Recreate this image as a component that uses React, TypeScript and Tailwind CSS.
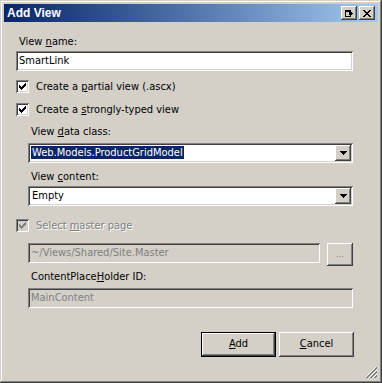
import React from "react";

const font = { fontFamily: '"DejaVu Sans Condensed", "DejaVu Sans", "Liberation Sans", sans-serif' };

const sunken =
  "shadow-[inset_1px_1px_#808080,inset_-1px_-1px_#ffffff,inset_2px_2px_#404040,inset_-2px_-2px_#d4d0c8]";
const raised =
  "shadow-[inset_-1px_-1px_#404040,inset_1px_1px_#ffffff,inset_-2px_-2px_#808080,inset_2px_2px_#d4d0c8]";

const CheckMark: React.FC<{ color: string }> = ({ color }) => (
  <svg width="7" height="7" viewBox="0 0 7 7" shapeRendering="crispEdges">
    <rect x="0" y="2" width="1" height="3" fill={color} />
    <rect x="1" y="3" width="1" height="3" fill={color} />
    <rect x="2" y="4" width="1" height="3" fill={color} />
    <rect x="3" y="3" width="1" height="3" fill={color} />
    <rect x="4" y="2" width="1" height="3" fill={color} />
    <rect x="5" y="1" width="1" height="3" fill={color} />
    <rect x="6" y="0" width="1" height="3" fill={color} />
  </svg>
);

const CheckBox: React.FC<{ disabled?: boolean }> = ({ disabled }) => (
  <div
    className={`w-[13px] h-[13px] shrink-0 flex items-center justify-center ${sunken} ${
      disabled ? "bg-[#d4d0c8]" : "bg-white"
    }`}
  >
    <CheckMark color={disabled ? "#808080" : "#000000"} />
  </div>
);

const Arrow = () => (
  <div className={`w-[16px] h-[16px] shrink-0 bg-[#d4d0c8] flex items-center justify-center ${raised}`}>
    <svg width="7" height="4" viewBox="0 0 7 4" shapeRendering="crispEdges">
      <path d="M0 0h7v1H0zM1 1h5v1H1zM2 2h3v1H2zM3 3h1v1H3z" fill="#000" />
    </svg>
  </div>
);

const Label: React.FC<{ children: React.ReactNode; className?: string }> = ({ children, className }) => (
  <div className={`h-[13px] leading-[13px] pl-[3px] text-black ${className ?? ""}`}>{children}</div>
);

const App: React.FC = () => {
  return (
    <div
      style={font}
      className="w-[382px] h-[383px] bg-[#d4d0c8] relative p-[4px] text-[11px] shadow-[inset_-1px_-1px_#404040,inset_1px_1px_#d4d0c8,inset_-2px_-2px_#808080,inset_2px_2px_#ffffff]"
    >
      {/* title bar */}
      <div className="h-[18px] flex items-center justify-between bg-gradient-to-r from-[#0a246a] to-[#a6caf0] pl-[3px] pr-[3px]">
        <span className="text-white font-bold text-[12px] leading-[13px] font-['Liberation_Sans',sans-serif]">
          Add View
        </span>
        <div className="flex gap-[2px]">
          <div className={`w-[16px] h-[14px] bg-[#d4d0c8] flex items-center justify-center ${raised}`}>
            <svg width="9" height="7" viewBox="0 0 9 7" shapeRendering="crispEdges">
              <path d="M0 0h6v2H0zM0 2h1v5H0zM0 6h6v1H0zM5 5h1v1H5z" fill="#000" />
              <path d="M4 2h1v3H4zM5 1h1v5H5zM6 2h1v3H6zM7 3h1v1H7z" fill="#000" />
            </svg>
          </div>
          <div className={`w-[16px] h-[14px] bg-[#d4d0c8] flex items-center justify-center ${raised}`}>
            <svg width="8" height="7" viewBox="0 0 8 7" shapeRendering="crispEdges">
              <path
                d="M0 0h2v1H0zM6 0h2v1H6zM1 1h2v1H1zM5 1h2v1H5zM2 2h4v1H2zM3 3h2v1H3zM2 4h4v1H2zM1 5h2v1H1zM5 5h2v1H5zM0 6h2v1H0zM6 6h2v1H6z"
                fill="#000"
              />
            </svg>
          </div>
        </div>
      </div>

      {/* body */}
      <div className="ml-[12px] w-[337px] flex flex-col">
        <Label className="mt-[13px]">
          View <u>n</u>ame:
        </Label>
        <div className={`mt-[3px] h-[20px] bg-white ${sunken} flex items-center px-[3px] text-black`}>SmartLink</div>

        <div className="mt-[9px] h-[13px] flex items-center gap-[7px]">
          <CheckBox />
          <span className="leading-[13px]">
            Create a <u>p</u>artial view (.ascx)
          </span>
        </div>
        <div className="mt-[10px] h-[13px] flex items-center gap-[7px]">
          <CheckBox />
          <span className="leading-[13px]">
            Create a <u>s</u>trongly-typed view
          </span>
        </div>

        <div className="pl-[12px] flex flex-col">
          <Label className="mt-[9px]">
            View <u>d</u>ata class:
          </Label>
          <div className={`mt-[5px] h-[20px] bg-white ${sunken} flex items-center p-[2px]`}>
            <div className="flex-1 pl-[1px]">
              <span className="bg-[#0a246a] text-white px-[1px] leading-[13px] inline-block">
                Web.Models.ProductGridModel
              </span>
            </div>
            <Arrow />
          </div>
          <Label className="mt-[7px]">
            View <u>c</u>ontent:
          </Label>
          <div className={`mt-[3px] h-[20px] bg-white ${sunken} flex items-center p-[2px]`}>
            <div className="flex-1 pl-[2px]">Empty</div>
            <Arrow />
          </div>
        </div>

        <div className="mt-[13px] h-[13px] flex items-center gap-[7px]">
          <CheckBox disabled />
          <span className="leading-[13px] text-[#808080] [text-shadow:1px_1px_0_#ffffff]">
            Select <u>m</u>aster page
          </span>
        </div>

        <div className="pl-[12px] flex flex-col">
          <div className="mt-[11px] flex items-start gap-[7px]">
            <div className={`w-[292px] h-[20px] bg-[#d4d0c8] ${sunken} flex items-center px-[3px] text-[#808080]`}>
              ~/Views/Shared/Site.Master
            </div>
            <div className={`w-[26px] h-[23px] bg-[#d4d0c8] ${raised} flex items-center justify-center text-[#808080] text-[9px]`}>
              ...
            </div>
          </div>
          <Label className="mt-[4px]">
            ContentPlace<u>H</u>older ID:
          </Label>
          <div className={`mt-[5px] h-[20px] bg-[#d4d0c8] ${sunken} flex items-center px-[3px] text-[#808080]`}>
            MainContent
          </div>
        </div>

        <div className="mt-[24px] w-[338px] flex justify-end gap-[3px]">
          <div className="w-[75px] h-[25px] border border-black">
            <div className={`w-full h-full bg-[#d4d0c8] ${raised} flex items-center justify-center`}>
              <span>
                <u>A</u>dd
              </span>
            </div>
          </div>
          <div className={`w-[75px] h-[25px] bg-[#d4d0c8] ${raised} flex items-center justify-center`}>
            <span>
              <u>C</u>ancel
            </span>
          </div>
        </div>
      </div>

      {/* resize grip */}
      <svg className="absolute right-[4px] bottom-[4px]" width="12" height="12" viewBox="0 0 12 12" shapeRendering="crispEdges">
        <path d="M11 0L0 11M11 4L4 11M11 8L8 11" stroke="#808080" strokeWidth="1" />
        <path d="M11 1L1 11M11 5L5 11M11 9L9 11" stroke="#808080" strokeWidth="1" />
        <path d="M11 -1L-1 11M11 3L3 11M11 7L7 11" stroke="#ffffff" strokeWidth="1" />
      </svg>
    </div>
  );
};

export default App;
